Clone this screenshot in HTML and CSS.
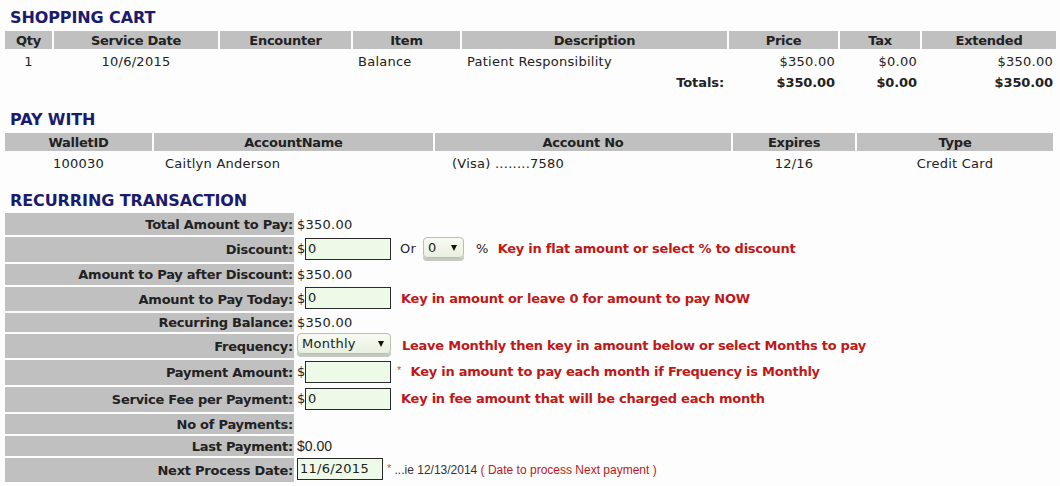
FILE: index.html
```html
<!DOCTYPE html>
<html>
<head>
<meta charset="utf-8">
<link rel="stylesheet" href="styles.css">
</head>
<body>
<div class="page">
  <h2 class="sec-title first">SHOPPING CART</h2>
  <table class="grid cart">
    <colgroup>
      <col style="width:47px"><col style="width:164px"><col style="width:131px"><col style="width:107px">
      <col style="width:265px"><col style="width:109px"><col style="width:80px"><col style="width:134px">
    </colgroup>
    <thead>
      <tr><th>Qty</th><th>Service Date</th><th>Encounter</th><th>Item</th><th>Description</th><th>Price</th><th>Tax</th><th>Extended</th></tr>
    </thead>
    <tbody>
      <tr class="data">
        <td class="c">1</td><td class="c">10/6/2015</td><td></td><td class="l">Balance</td><td class="l">Patient Responsibility</td>
        <td class="r">$350.00</td><td class="r">$0.00</td><td class="r">$350.00</td>
      </tr>
      <tr class="totals">
        <td></td><td></td><td></td><td></td><td class="r">Totals:</td>
        <td class="r">$350.00</td><td class="r">$0.00</td><td class="r">$350.00</td>
      </tr>
    </tbody>
  </table>

  <h2 class="sec-title">PAY WITH</h2>
  <table class="grid pay">
    <colgroup>
      <col style="width:147px"><col style="width:279px"><col style="width:296px"><col style="width:122px"><col style="width:196px">
    </colgroup>
    <thead>
      <tr><th>WalletID</th><th>AccountName</th><th>Account No</th><th>Expires</th><th>Type</th></tr>
    </thead>
    <tbody>
      <tr class="data">
        <td class="c">100030</td><td class="name">Caitlyn Anderson</td><td class="acct">(Visa) ........7580</td><td class="c">12/16</td><td class="c">Credit Card</td>
      </tr>
    </tbody>
  </table>

  <h2 class="sec-title third">RECURRING TRANSACTION</h2>
  <table class="form">
    <tbody>
      <tr class="txt tall"><th>Total Amount to Pay:</th><td>$350.00</td></tr>
      <tr class="inp"><th>Discount:</th><td><span class="cur">$</span><span class="field">0</span><span class="or">Or</span><span class="sel small">0<i class="arr"></i></span><span class="pct">%</span><span class="hint h-disc">Key in flat amount or select % to discount</span></td></tr>
      <tr class="txt mid"><th>Amount to Pay after Discount:</th><td>$350.00</td></tr>
      <tr class="inp short"><th>Amount to Pay Today:</th><td><span class="cur">$</span><span class="field">0</span><span class="hint h-after">Key in amount or leave 0 for amount to pay NOW</span></td></tr>
      <tr class="txt low"><th>Recurring Balance:</th><td>$350.00</td></tr>
      <tr class="inp short"><th>Frequency:</th><td><span class="sel wide">Monthly<i class="arr"></i></span><span class="hint h-freq">Leave Monthly then key in amount below or select Months to pay</span></td></tr>
      <tr class="inp"><th>Payment Amount:</th><td><span class="cur">$</span><span class="field"></span><span class="star">*</span><span class="hint h-pay">Key in amount to pay each month if Frequency is Monthly</span></td></tr>
      <tr class="inp"><th>Service Fee per Payment:</th><td><span class="cur">$</span><span class="field">0</span><span class="hint h-after">Key in fee amount that will be charged each month</span></td></tr>
      <tr class="txt"><th>No of Payments:</th><td></td></tr>
      <tr class="txt"><th>Last Payment:</th><td class="arial">$0.00</td></tr>
      <tr class="inp short"><th>Next Process Date:</th><td><span class="field date">11/6/2015</span><span class="star s2">*</span><span class="note">...ie 12/13/2014 <span class="note-red">( Date to process Next payment )</span></span></td></tr>
    </tbody>
  </table>
</div>
</body>
</html>
```

FILE: styles.css
```css
html, body {
  margin: 0;
  padding: 0;
  background: #fdfdfd;
}
body {
  font-family: "DejaVu Sans", Verdana, sans-serif;
  font-size: 13px;
  color: #222;
  width: 1060px;
  height: 486px;
  overflow: hidden;
  letter-spacing: 0.25px;
}
.page {
  padding: 0 0 0 3px;
}
.sec-title {
  margin: 17px 0 0 7px;
  font-size: 16px;
  line-height: 20px;
  font-weight: bold;
  color: #1b1b6e;
  letter-spacing: -0.1px;
}
.sec-title.first {
  margin-top: 8px;
}
.sec-title.third {
  margin-top: 16px;
}
.grid {
  table-layout: fixed;
  border-collapse: separate;
  border-spacing: 2px;
  margin-top: 1px;
}
.grid.cart { width: 1054px; }
.grid.pay { width: 1052px; }
.grid th {
  background: #c0c0c0;
  height: 18px;
  padding: 0;
  font-weight: bold;
  text-align: center;
  white-space: nowrap;
  letter-spacing: -0.25px;
}
.grid td {
  padding: 0 3px;
  white-space: nowrap;
  height: 20px;
}
.grid .totals td {
  font-weight: bold;
  height: 18px;
  letter-spacing: -0.1px;
}
.c { text-align: center; }
.l { text-align: left; }
.r { text-align: right; }
.grid td.l { padding-left: 5px; }
.grid td.name { padding-left: 11px; }
.grid td.acct { padding-left: 17px; }

.form {
  border-collapse: separate;
  border-spacing: 0 2px;
  margin-top: 0;
  margin-left: 2px;
}
.form th {
  width: 288px;
  background: #c0c0c0;
  text-align: right;
  padding: 0 1px 0 0;
  font-weight: bold;
  white-space: nowrap;
  letter-spacing: -0.25px;
}
.form td {
  padding: 0 0 0 3px;
  white-space: nowrap;
}
.form tr.txt th, .form tr.txt td { height: 20px; }
.form tr.inp th, .form tr.inp td { height: 25px; }
.form tr.tall th, .form tr.tall td { height: 22px; }
.form tr.mid th, .form tr.mid td { height: 21px; }
.form tr.low th, .form tr.low td { height: 19px; }
.form tr.short th, .form tr.short td { height: 24px; }
.form td.arial {
  font-family: "Liberation Sans", Arial, sans-serif;
  font-size: 14px;
  letter-spacing: 0;
}
.cur {
  display: inline-block;
  width: 8px;
}
.field {
  display: inline-block;
  vertical-align: middle;
  box-sizing: border-box;
  width: 86px;
  height: 22px;
  line-height: 20px;
  border: 1px solid #2a2a2a;
  background: #eefae8;
  padding-left: 2px;
  margin-top: -2px;
}
.or {
  margin-left: 9px;
}
.sel {
  display: inline-block;
  position: relative;
  vertical-align: middle;
  box-sizing: border-box;
  height: 21px;
  line-height: 19px;
  border: 1px solid #b9bfb3;
  border-radius: 4px;
  background: linear-gradient(#f7fbf2, #e8f0df);
  box-shadow: 0 3px 0 #c4c8c0;
  padding-left: 4px;
  margin-top: -4px;
}
.sel.small {
  width: 41px;
  margin-left: 7px;
}
.sel.wide {
  width: 94px;
  margin-top: -5px;
}
.arr {
  position: absolute;
  right: 6px;
  top: 7px;
  width: 0;
  height: 0;
  border-left: 3px solid transparent;
  border-right: 3px solid transparent;
  border-top: 6px solid #111;
}
.pct {
  margin-left: 12px;
}
.hint {
  color: #c01818;
  font-weight: bold;
  letter-spacing: -0.25px;
}
.h-disc { margin-left: 9px; }
.h-after { margin-left: 10px; }
.h-freq { margin-left: 11px; }
.h-pay { margin-left: 9px; }
.star {
  color: #d24a4a;
  font-family: "Liberation Sans", Arial, sans-serif;
  font-size: 11px;
  margin-left: 6px;
  vertical-align: 2px;
}
.star.s2 {
  margin-left: 4px;
}
.note {
  font-family: "Liberation Sans", Arial, sans-serif;
  font-size: 12px;
  color: #333;
  margin-left: 3px;
  letter-spacing: 0;
}
.note-red {
  color: #c01818;
}
```
